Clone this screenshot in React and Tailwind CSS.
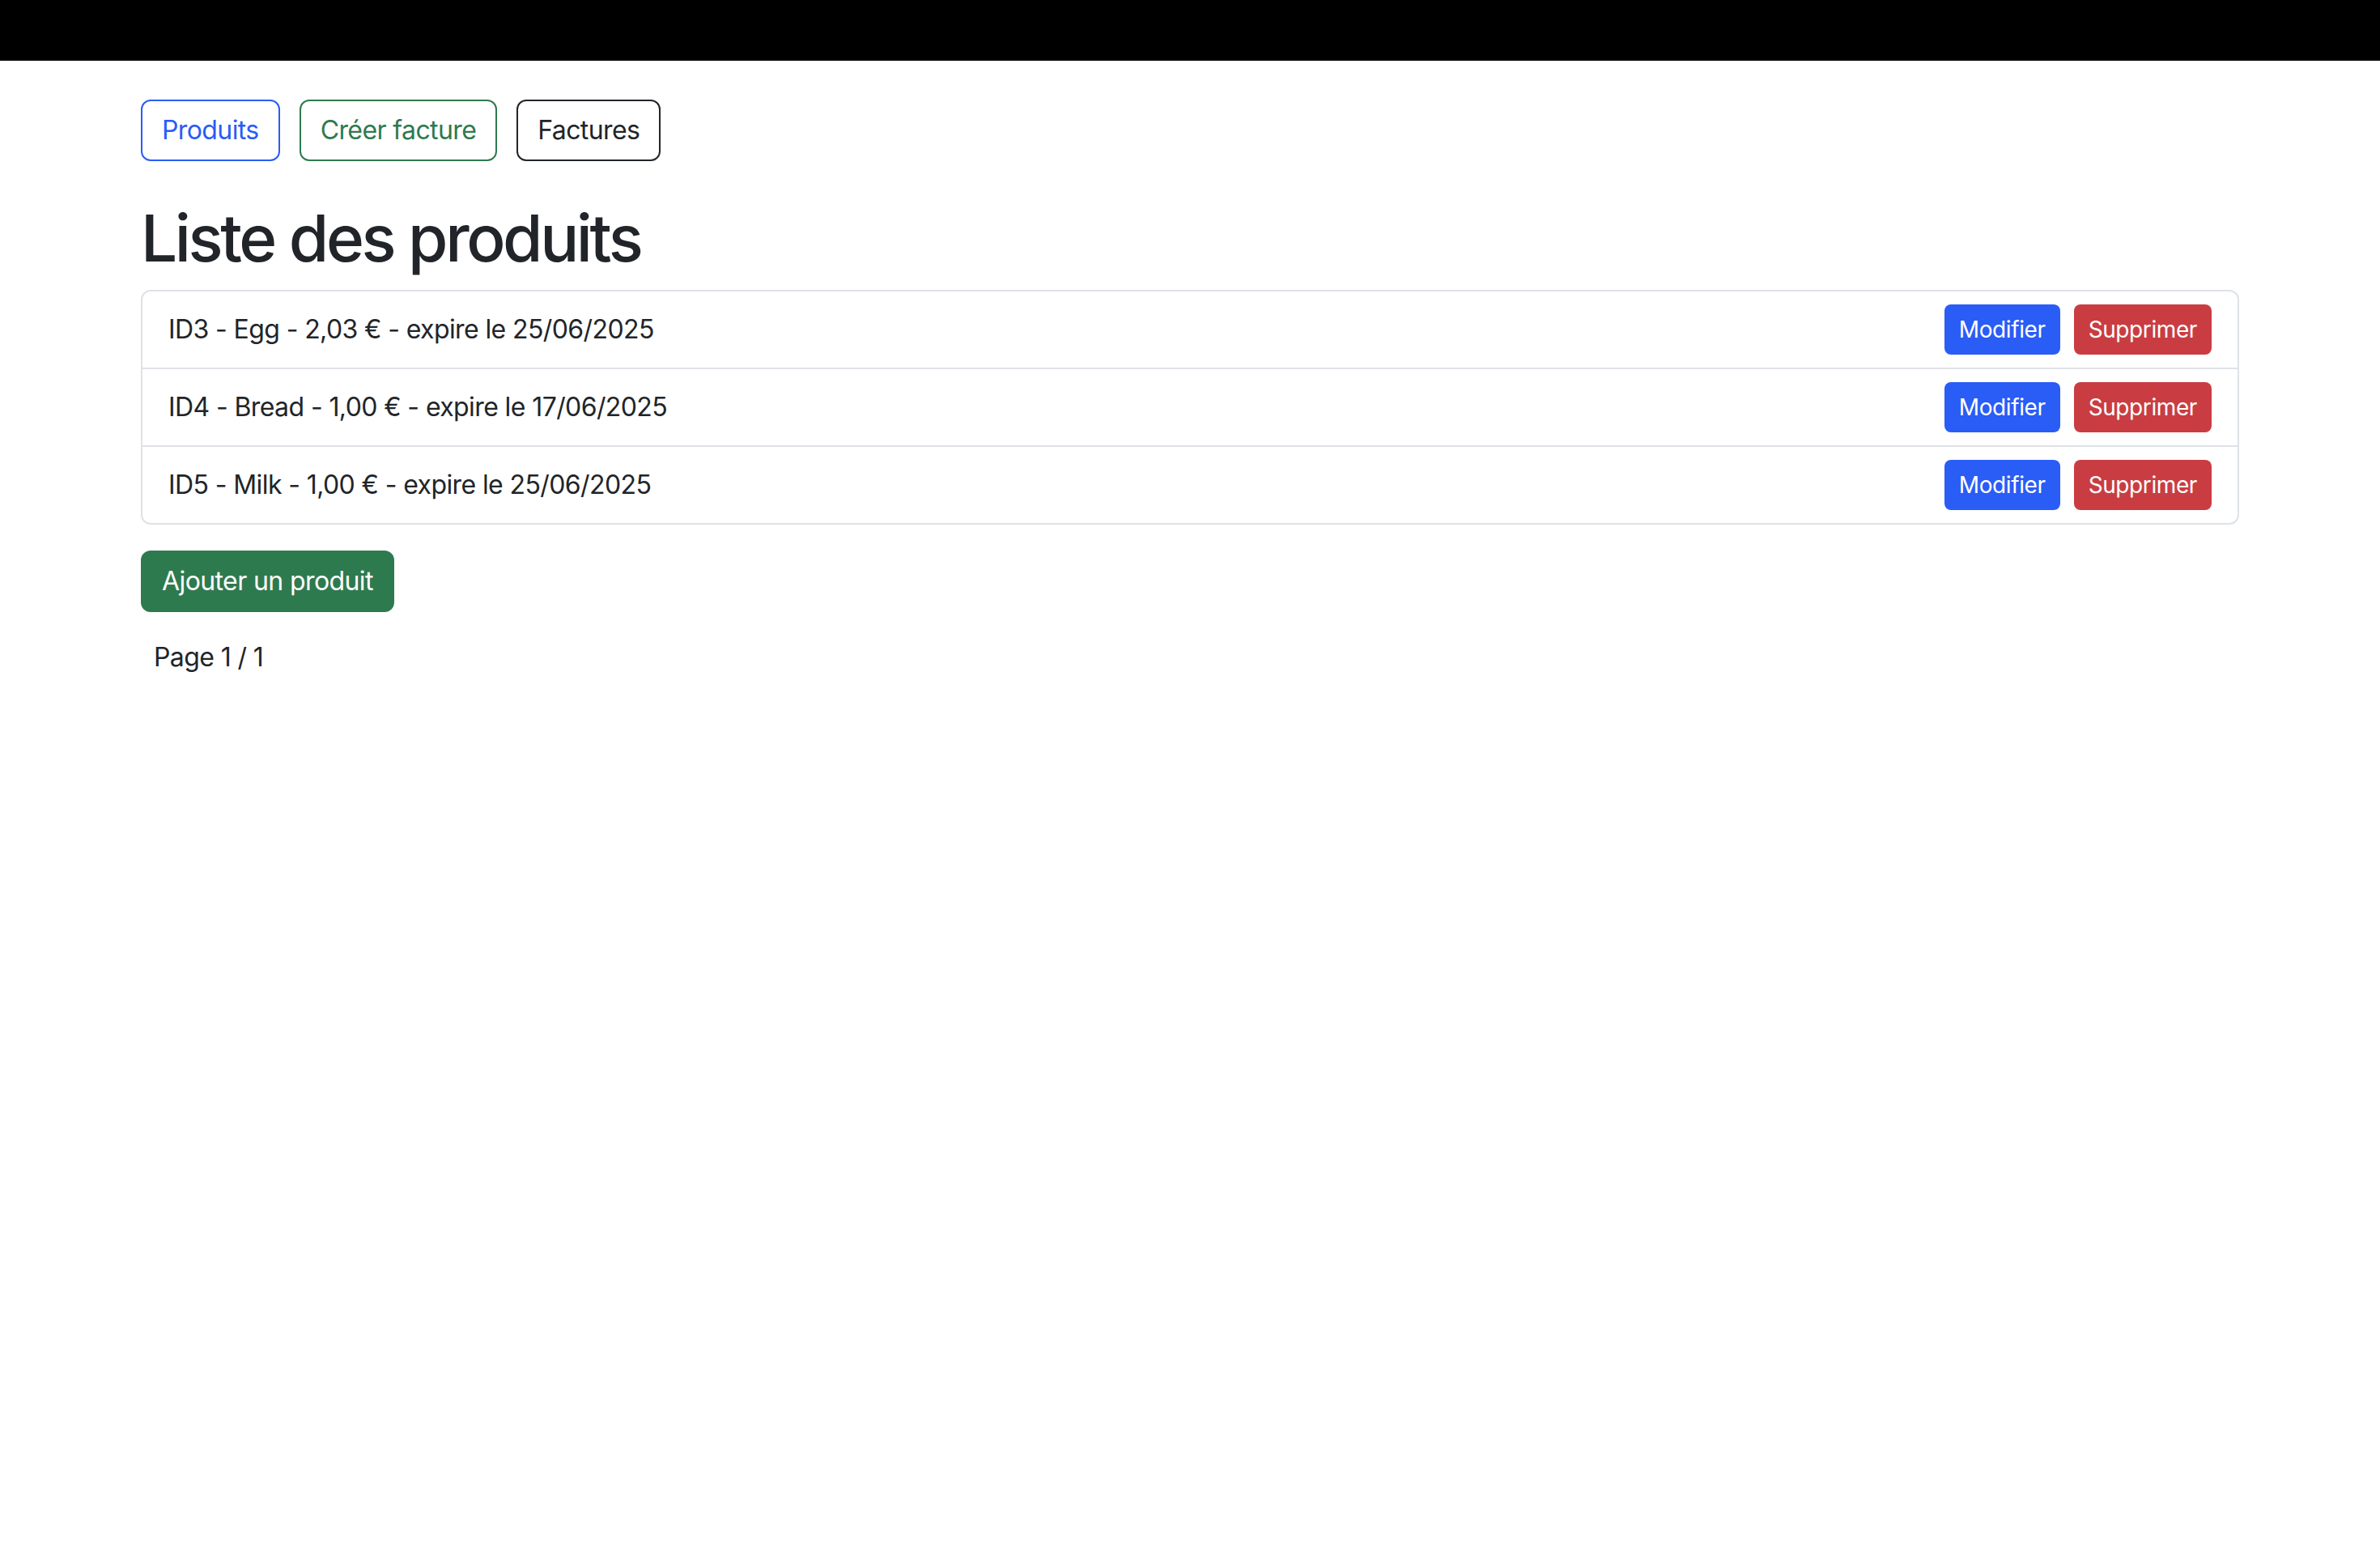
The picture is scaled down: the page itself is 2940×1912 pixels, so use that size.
import React from "react";

const products = [
  { id: 3, name: "Egg", price: "2,03", expires: "25/06/2025" },
  { id: 4, name: "Bread", price: "1,00", expires: "17/06/2025" },
  { id: 5, name: "Milk", price: "1,00", expires: "25/06/2025" },
];

export default function App() {
  return (
    <div className="min-h-screen bg-white text-[#212529] font-['Inter','Liberation_Sans',sans-serif]">
      <nav className="h-[75px] bg-black" />

      <div className="mx-auto max-w-[2640px] px-[24px]">
        <div className="flex gap-[24px] mt-[48px] mb-[47px] tracking-[-0.6px]">
          <button className="h-[76px] px-[24px] border-2 border-[#2a5cf6] text-[#2a5cf6] rounded-[12px] text-[32px]">
            Produits
          </button>
          <button className="h-[76px] px-[24px] border-2 border-[#2e7a4f] text-[#2e7a4f] rounded-[12px] text-[32px]">
            Créer facture
          </button>
          <button className="h-[76px] px-[24px] border-2 border-[#212529] text-[#212529] rounded-[12px] text-[32px]">
            Factures
          </button>
        </div>

        <h1 className="text-[80px] leading-[96px] font-medium mb-[16px] tracking-[-3.4px]">
          Liste des produits
        </h1>

        <ul className="border-2 border-[#dee2e6] rounded-[12px]">
          {products.map((p, i) => (
            <li
              key={p.id}
              className={
                "flex items-center justify-between px-[32px] text-[32px] tracking-[-0.6px] " +
                (i < products.length - 1 ? "h-[96px] border-b-2 border-[#dee2e6]" : "h-[94px]")
              }
            >
              <span>
                ID{p.id} - {p.name} - {p.price} € - expire le {p.expires}
              </span>
              <div className="flex gap-[17px]">
                <button className="h-[62px] px-[18px] bg-[#2a5cf6] text-white rounded-[8px] text-[28px] tracking-[-0.4px]">
                  Modifier
                </button>
                <button className="h-[62px] px-[18px] bg-[#c93d42] text-white rounded-[8px] text-[28px] tracking-[-0.4px]">
                  Supprimer
                </button>
              </div>
            </li>
          ))}
        </ul>

        <button className="mt-[32px] h-[76px] px-[26px] bg-[#2e7a4f] text-white rounded-[12px] text-[32px] tracking-[-0.6px]">
          Ajouter un produit
        </button>

        <div className="mt-[32px] ml-[16px] text-[32px] leading-[48px] tracking-[-0.6px]">
          Page 1 / 1
        </div>
      </div>
    </div>
  );
}
